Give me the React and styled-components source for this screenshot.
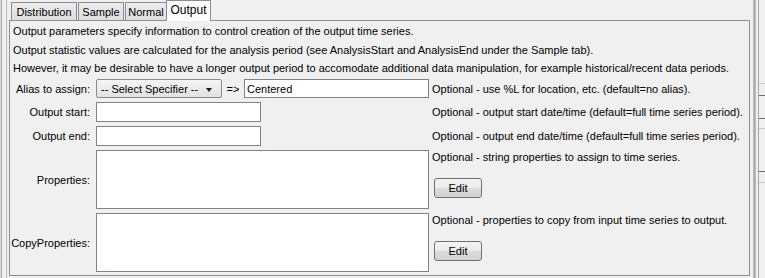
import React from 'react';
import styled, {createGlobalStyle} from 'styled-components';

const GlobalStyle = createGlobalStyle`
  html, body {
    margin: 0;
    padding: 0;
    background: #f0f0f0;
  }
`;

const tabs = [
  {label: 'Distribution', width: 66},
  {label: 'Sample', width: 46},
  {label: 'Normal', width: 42},
  {label: 'Output', width: 45, selected: true}
];

const rows = [
  {label: 'Output start:', note: 'Optional - output start date/time (default=full time series period).'},
  {label: 'Output end:', note: 'Optional - output end date/time (default=full time series period).'}
];

const areas = [
  {label: 'Properties:', note: 'Optional - string properties to assign to time series.'},
  {label: 'CopyProperties:', note: 'Optional - properties to copy from input time series to output.'}
];

export default function App() {
  return (
    <Frame>
      <GlobalStyle/>
      <LeftEdge/>
      <Main>
        <TabBar>
          {tabs.map(tab => (
            <Tab key={tab.label} $w={tab.width} $selected={tab.selected}>{tab.label}</Tab>
          ))}
        </TabBar>
        <Panel>
          <Intro>
            <Line>Output parameters specify information to control creation of the output time series.</Line>
            <Line>Output statistic values are calculated for the analysis period (see AnalysisStart and AnalysisEnd under the Sample tab).</Line>
            <Line>However, it may be desirable to have a longer output period to accomodate additional data manipulation, for example historical/recent data periods.</Line>
          </Intro>
          <FormGrid>
            <Label>Alias to assign:</Label>
            <AliasCell>
              <Select>
                <span>-- Select Specifier --</span>
                <Arrow/>
              </Select>
              <Arrow2>=&gt;</Arrow2>
              <TextField $grow defaultValue="Centered"/>
            </AliasCell>
            <Note>Optional - use %L for location, etc. (default=no alias).</Note>

            {rows.map(row => (
              <React.Fragment key={row.label}>
                <Label>{row.label}</Label>
                <FieldCell>
                  <TextField $width={165}/>
                </FieldCell>
                <Note>{row.note}</Note>
              </React.Fragment>
            ))}

            {areas.map(area => (
              <React.Fragment key={area.label}>
                <Label>{area.label}</Label>
                <TextArea/>
                <NoteStack>
                  <span>{area.note}</span>
                  <EditButton type="button">Edit</EditButton>
                </NoteStack>
              </React.Fragment>
            ))}
          </FormGrid>
        </Panel>
      </Main>
      <RightEdge>
        <Gripper/>
        <SidePanel>
          <Rule $top={83} $color="#c8c8c8"/>
          <Rule $top={11} $color="#6e6e6e"/>
          <Rule $top={22} $color="#6e6e6e"/>
          <Rule $top={9} $color="#c8c8c8"/>
          <Rule $top={42} $color="#6e6e6e"/>
          <Rule $top={10} $color="#c8c8c8"/>
        </SidePanel>
      </RightEdge>
    </Frame>
  );
}

const Frame = styled.div`
  display: flex;
  width: 765px;
  height: 278px;
  overflow: hidden;
  background: #f0f0f0;
  font-family: Tahoma, "Liberation Sans", Arial, sans-serif;
  font-size: 11px;
  color: #000;
`;

const LeftEdge = styled.div`
  flex: none;
  width: 9px;
  background: linear-gradient(to right,
    #d8d8d8 0 1px, #a9a9a9 1px 2px, #f0f0f0 2px 6px,
    #b9b9b9 6px 7px, #f0f0f0 7px);
`;

const Main = styled.div`
  flex: none;
  width: 741px;
  display: flex;
  flex-direction: column;
  padding-bottom: 2px;
`;

const TabBar = styled.div`
  height: 20px;
  display: flex;
  align-items: flex-end;
  padding-left: 2px;
  position: relative;
  z-index: 1;
`;

const Tab = styled.div`
  box-sizing: border-box;
  width: ${p => p.$w}px;
  height: ${p => p.$selected ? 21 : 18}px;
  margin-left: ${p => p.$selected ? -1 : 1}px;
  margin-bottom: ${p => p.$selected ? -1 : 0}px;
  border: 1px solid #898c95;
  border-bottom: none;
  background: ${p => p.$selected ? '#fcfcfc' : 'linear-gradient(#ececec, #dedede)'};
  display: flex;
  align-items: ${p => p.$selected ? 'flex-start' : 'center'};
  padding-top: ${p => p.$selected ? 2 : 0}px;
  justify-content: center;
  font-size: ${p => p.$selected ? 12 : 11}px;

  &:first-child {
    margin-left: 0;
  }
`;

const Panel = styled.div`
  flex: 1;
  box-sizing: border-box;
  border: 1px solid #8e8f8f;
  background: #f0f0f0;
  padding: 1px 3px 0 3px;
`;

const Intro = styled.div`
  display: flex;
  flex-direction: column;
`;

const Line = styled.div`
  height: 18.5px;
  line-height: 18.5px;
  white-space: nowrap;
`;

const FormGrid = styled.div`
  display: grid;
  grid-template-columns: 80px 333px 1fr;
  grid-template-rows: 19px 20px 20px 59px 59px;
  column-gap: 3px;
  row-gap: 4px;
  margin-top: 1.5px;
`;

const Label = styled.div`
  display: flex;
  align-items: center;
  justify-content: flex-end;
  padding-right: 3px;
  white-space: nowrap;
`;

const FieldCell = styled.div`
  display: flex;
  align-items: stretch;
`;

const AliasCell = styled.div`
  display: flex;
  align-items: stretch;
`;

const Select = styled.div`
  box-sizing: border-box;
  width: 126px;
  border: 1px solid #8a8a8a;
  border-radius: 2px;
  background: linear-gradient(#f4f4f4, #e2e2e2);
  display: flex;
  align-items: center;
  justify-content: space-between;
  padding: 0 9px 0 4px;
  white-space: nowrap;
`;

const Arrow = styled.span`
  width: 0;
  height: 0;
  margin-top: 2px;
  border-left: 3.5px solid transparent;
  border-right: 3.5px solid transparent;
  border-top: 4px solid #1a1a1a;
`;

const Arrow2 = styled.span`
  width: 22px;
  display: flex;
  align-items: center;
  justify-content: center;
`;

const TextField = styled.input`
  box-sizing: border-box;
  ${p => p.$grow ? 'flex: 1;' : `width: ${p.$width}px;`}
  height: 100%;
  margin: 0;
  border: 1px solid #7f838c;
  background: #fff;
  padding: 0 2px;
  font: inherit;
  color: #000;
  outline: none;
`;

const TextArea = styled.textarea`
  box-sizing: border-box;
  width: 100%;
  height: 100%;
  margin: 0;
  border: 1px solid #7f838c;
  background: #fff;
  resize: none;
  font: inherit;
  outline: none;
`;

const Note = styled.div`
  display: flex;
  align-items: center;
  white-space: nowrap;
`;

const NoteStack = styled.div`
  display: flex;
  flex-direction: column;
  align-items: flex-start;
  white-space: nowrap;
  line-height: 14px;
  gap: 14px;
`;

const EditButton = styled.button`
  box-sizing: border-box;
  width: 48px;
  height: 20px;
  margin: 0 0 0 2px;
  padding: 0;
  border: 1px solid #707070;
  border-radius: 3px;
  background: linear-gradient(#f3f3f3 0%, #ebebeb 50%, #dcdcdc 51%, #d2d2d2 100%);
  font: inherit;
  color: #000;
`;

const RightEdge = styled.div`
  flex: 1;
  display: flex;
`;

const Gripper = styled.div`
  width: 3px;
  margin-left: 3px;
  background: linear-gradient(to right, #c4c4c4, #a8a8a8, #c4c4c4);
`;

const SidePanel = styled.div`
  flex: 1;
  margin-left: 2px;
  border-left: 1px solid #a7a7a7;
  display: flex;
  flex-direction: column;
`;

const Rule = styled.div`
  margin-top: ${p => p.$top}px;
  height: 1px;
  background: ${p => p.$color};
`;
